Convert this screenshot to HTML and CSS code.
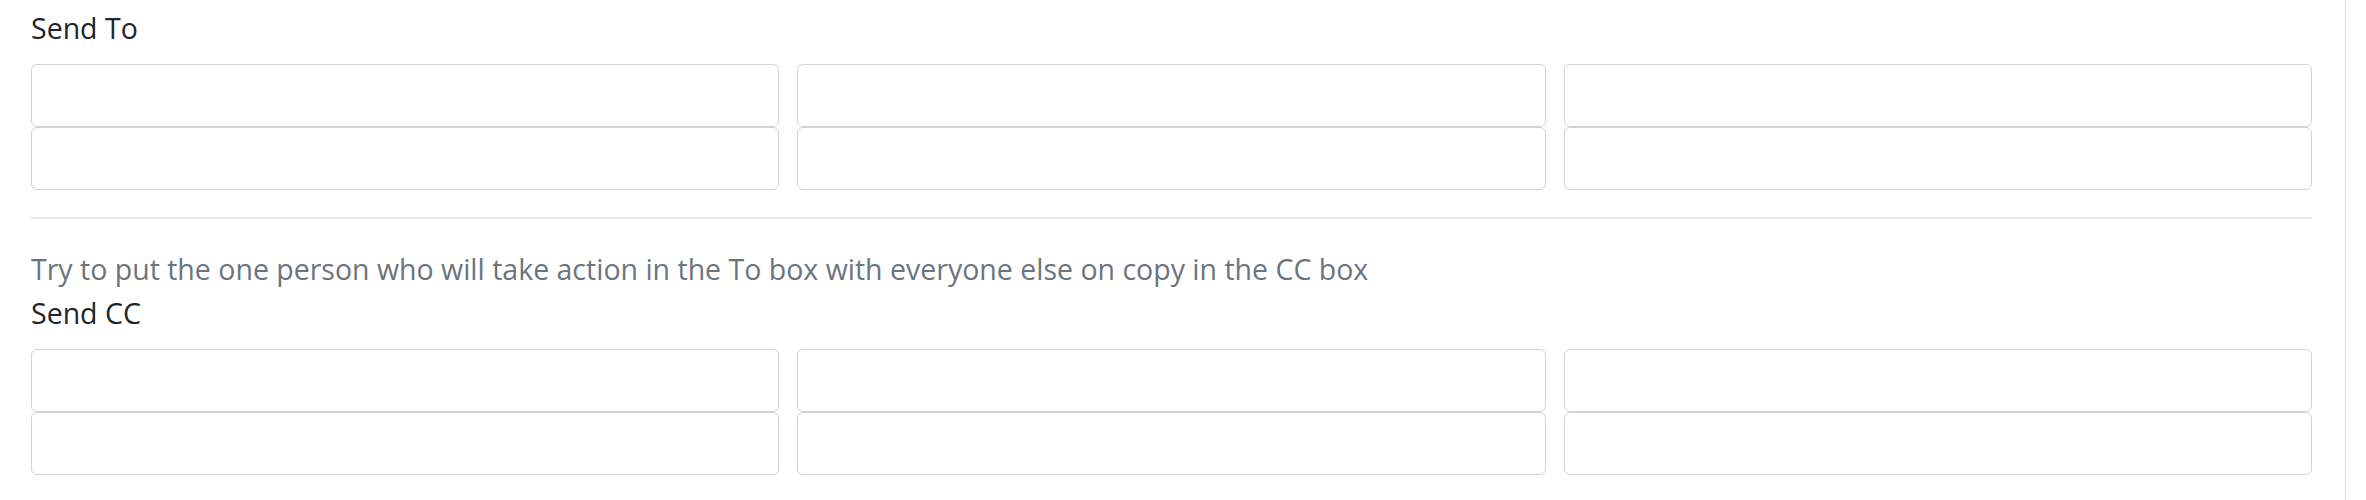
FILE: index.html
```html
<!DOCTYPE html>
<html lang="en">
<head>
  <meta charset="UTF-8">
  <meta name="viewport" content="width=device-width, initial-scale=1.0">
  <title>Recipients</title>
  <link rel="stylesheet" href="styles.css">
</head>
<body>
  <div class="panel">
    <label class="field-label">Send To</label>
    <div class="recipient-grid">
      <input type="text" class="form-control">
      <input type="text" class="form-control">
      <input type="text" class="form-control">
      <input type="text" class="form-control">
      <input type="text" class="form-control">
      <input type="text" class="form-control">
    </div>

    <hr class="divider">

    <div class="help-text">Try to put the one person who will take action in the To box with everyone else on copy in the CC box</div>
    <label class="field-label">Send CC</label>
    <div class="recipient-grid">
      <input type="text" class="form-control">
      <input type="text" class="form-control">
      <input type="text" class="form-control">
      <input type="text" class="form-control">
      <input type="text" class="form-control">
      <input type="text" class="form-control">
    </div>
  </div>
</body>
</html>
```

FILE: styles.css
```css
body {
  margin: 0;
  padding: 0;
  background-color: #fff;
  font-family: "Segoe UI", "Open Sans", Arial, sans-serif;
  font-size: 28.5px;
  line-height: 44px;
  color: #212529;
}

.panel {
  width: 2281px;
  min-height: 500px;
  padding: 6px 33px 0 31px;
  border-right: 1px solid #dcdfe3;
}

.field-label {
  display: block;
  margin-bottom: 14px;
}

.recipient-grid {
  display: grid;
  grid-template-columns: repeat(3, 1fr);
  column-gap: 18px;
  row-gap: 0;
}

.form-control {
  box-sizing: border-box;
  width: 100%;
  height: 63px;
  margin: 0;
  padding: 6px 18px;
  font: inherit;
  color: #495057;
  background-color: #fff;
  border: 1px solid #ced4da;
  border-radius: 6px;
  outline: none;
}

.divider {
  margin: 27px 0 28px;
  border: 0;
  border-top: 2px solid #e6e7e8;
}

.help-text {
  color: #6c757d;
}
```
